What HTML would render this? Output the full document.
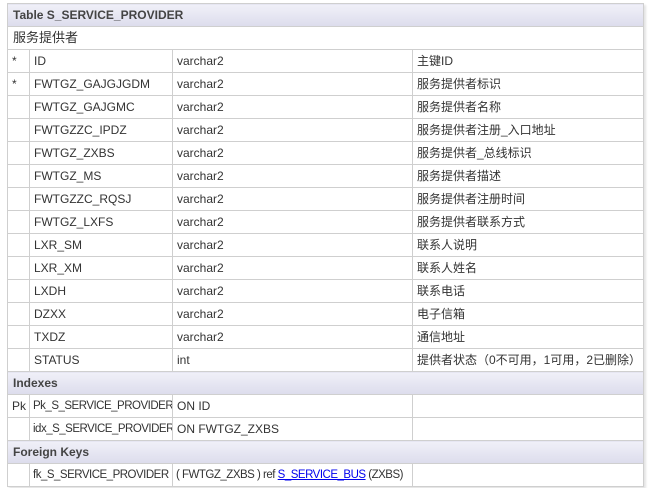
<!DOCTYPE html>
<html><head><style>
body{margin:0;background:#fff;font-family:"Liberation Sans","Noto Sans CJK SC",sans-serif;font-size:12px;color:#333}
table{position:absolute;left:7px;top:3px;width:637px;table-layout:fixed;border-collapse:collapse;box-shadow:2px 2px 2px #e4e4e4;font-size:12px}
td{border:1px solid #cfcfcf;height:22px;padding:0 0 0 4px;white-space:nowrap;overflow:hidden;line-height:14px}
tr.h td{background:linear-gradient(#f0f0f8,#dcdcec);font-weight:bold;color:#444;padding-left:5px}
tr.d td{padding-left:5px;font-size:13px}
td.s{letter-spacing:-0.5px;font-size:11.5px;padding-left:3px}
td.f{letter-spacing:-0.5px;font-size:11.5px;padding-left:3px}
a{color:#00e}
</style></head><body>
<table>
<col style="width:22px"><col style="width:143px"><col style="width:240px"><col>
<tr class="h"><td colspan="4">Table S_SERVICE_PROVIDER</td></tr>
<tr class="d"><td colspan="4">服务提供者</td></tr>
<tr><td>*</td><td>ID</td><td>varchar2</td><td>主键ID</td></tr>
<tr><td>*</td><td>FWTGZ_GAJGJGDM</td><td>varchar2</td><td>服务提供者标识</td></tr>
<tr><td></td><td>FWTGZ_GAJGMC</td><td>varchar2</td><td>服务提供者名称</td></tr>
<tr><td></td><td>FWTGZZC_IPDZ</td><td>varchar2</td><td>服务提供者注册_入口地址</td></tr>
<tr><td></td><td>FWTGZ_ZXBS</td><td>varchar2</td><td>服务提供者_总线标识</td></tr>
<tr><td></td><td>FWTGZ_MS</td><td>varchar2</td><td>服务提供者描述</td></tr>
<tr><td></td><td>FWTGZZC_RQSJ</td><td>varchar2</td><td>服务提供者注册时间</td></tr>
<tr><td></td><td>FWTGZ_LXFS</td><td>varchar2</td><td>服务提供者联系方式</td></tr>
<tr><td></td><td>LXR_SM</td><td>varchar2</td><td>联系人说明</td></tr>
<tr><td></td><td>LXR_XM</td><td>varchar2</td><td>联系人姓名</td></tr>
<tr><td></td><td>LXDH</td><td>varchar2</td><td>联系电话</td></tr>
<tr><td></td><td>DZXX</td><td>varchar2</td><td>电子信箱</td></tr>
<tr><td></td><td>TXDZ</td><td>varchar2</td><td>通信地址</td></tr>
<tr><td></td><td>STATUS</td><td>int</td><td>提供者状态（0不可用，1可用，2已删除）</td></tr>
<tr class="h"><td colspan="4">Indexes</td></tr>
<tr><td>Pk</td><td class="s">Pk_S_SERVICE_PROVIDER</td><td>ON ID</td><td></td></tr>
<tr><td></td><td class="s">idx_S_SERVICE_PROVIDER</td><td>ON FWTGZ_ZXBS</td><td></td></tr>
<tr class="h"><td colspan="4">Foreign Keys</td></tr>
<tr><td></td><td class="s">fk_S_SERVICE_PROVIDER</td><td class="f">( FWTGZ_ZXBS ) ref <a href="#">S_SERVICE_BUS</a> (ZXBS)</td><td></td></tr>
</table>
</body></html>
